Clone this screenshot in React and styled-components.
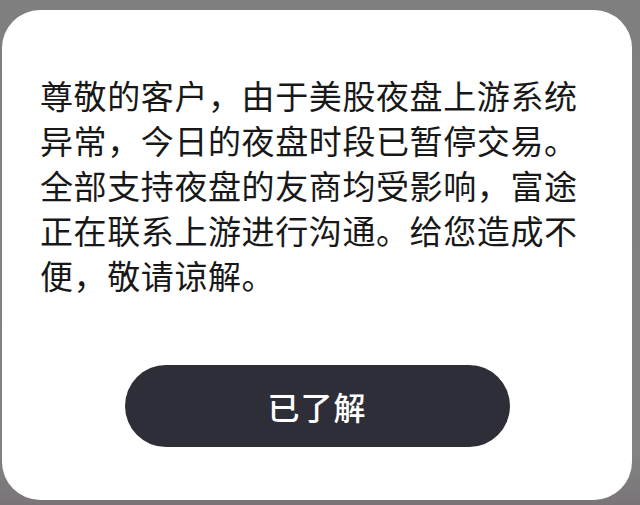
import React from 'react';
import styled, { createGlobalStyle } from 'styled-components';

const GlobalStyle = createGlobalStyle`
    html, body {
        margin: 0;
        padding: 0;
        background: #808080;
    }
    body {
        font-family: "Noto Sans CJK SC", "Noto Sans", sans-serif;
    }
`;

const Page = styled.div`
    width: 640px;
    height: 505px;
    box-sizing: border-box;
    padding: 10px 8px 5px 2px;
    background: linear-gradient(#7f7f7f, #828282 90%, #7a7478);
`;

const Card = styled.div`
    width: 100%;
    height: 100%;
    background: #ffffff;
    border-radius: 38px;
    display: flex;
    flex-direction: column;
    align-items: center;
    box-sizing: border-box;
    padding-top: 63px;
`;

const Message = styled.p`
    margin: 0;
    align-self: stretch;
    padding: 0 38px;
    font-size: 33px;
    line-height: 45px;
    letter-spacing: 0.6px;
    color: #181818;
`;

const ConfirmButton = styled.button`
    margin-top: 67px;
    width: 385px;
    height: 82px;
    border: none;
    border-radius: 41px;
    background: #2d2e38;
    color: #ffffff;
    font-family: inherit;
    font-size: 32px;
    font-weight: 500;
    letter-spacing: 1px;
    cursor: pointer;
`;

const App = () => {
    return (
        <>
            <GlobalStyle />
            <Page>
                <Card>
                    <Message>
                        尊敬的客户，由于美股夜盘上游系统异常，今日的夜盘时段已暂停交易。全部支持夜盘的友商均受影响，富途正在联系上游进行沟通。给您造成不便，敬请谅解。
                    </Message>
                    <ConfirmButton>已了解</ConfirmButton>
                </Card>
            </Page>
        </>
    );
};

export default App;
